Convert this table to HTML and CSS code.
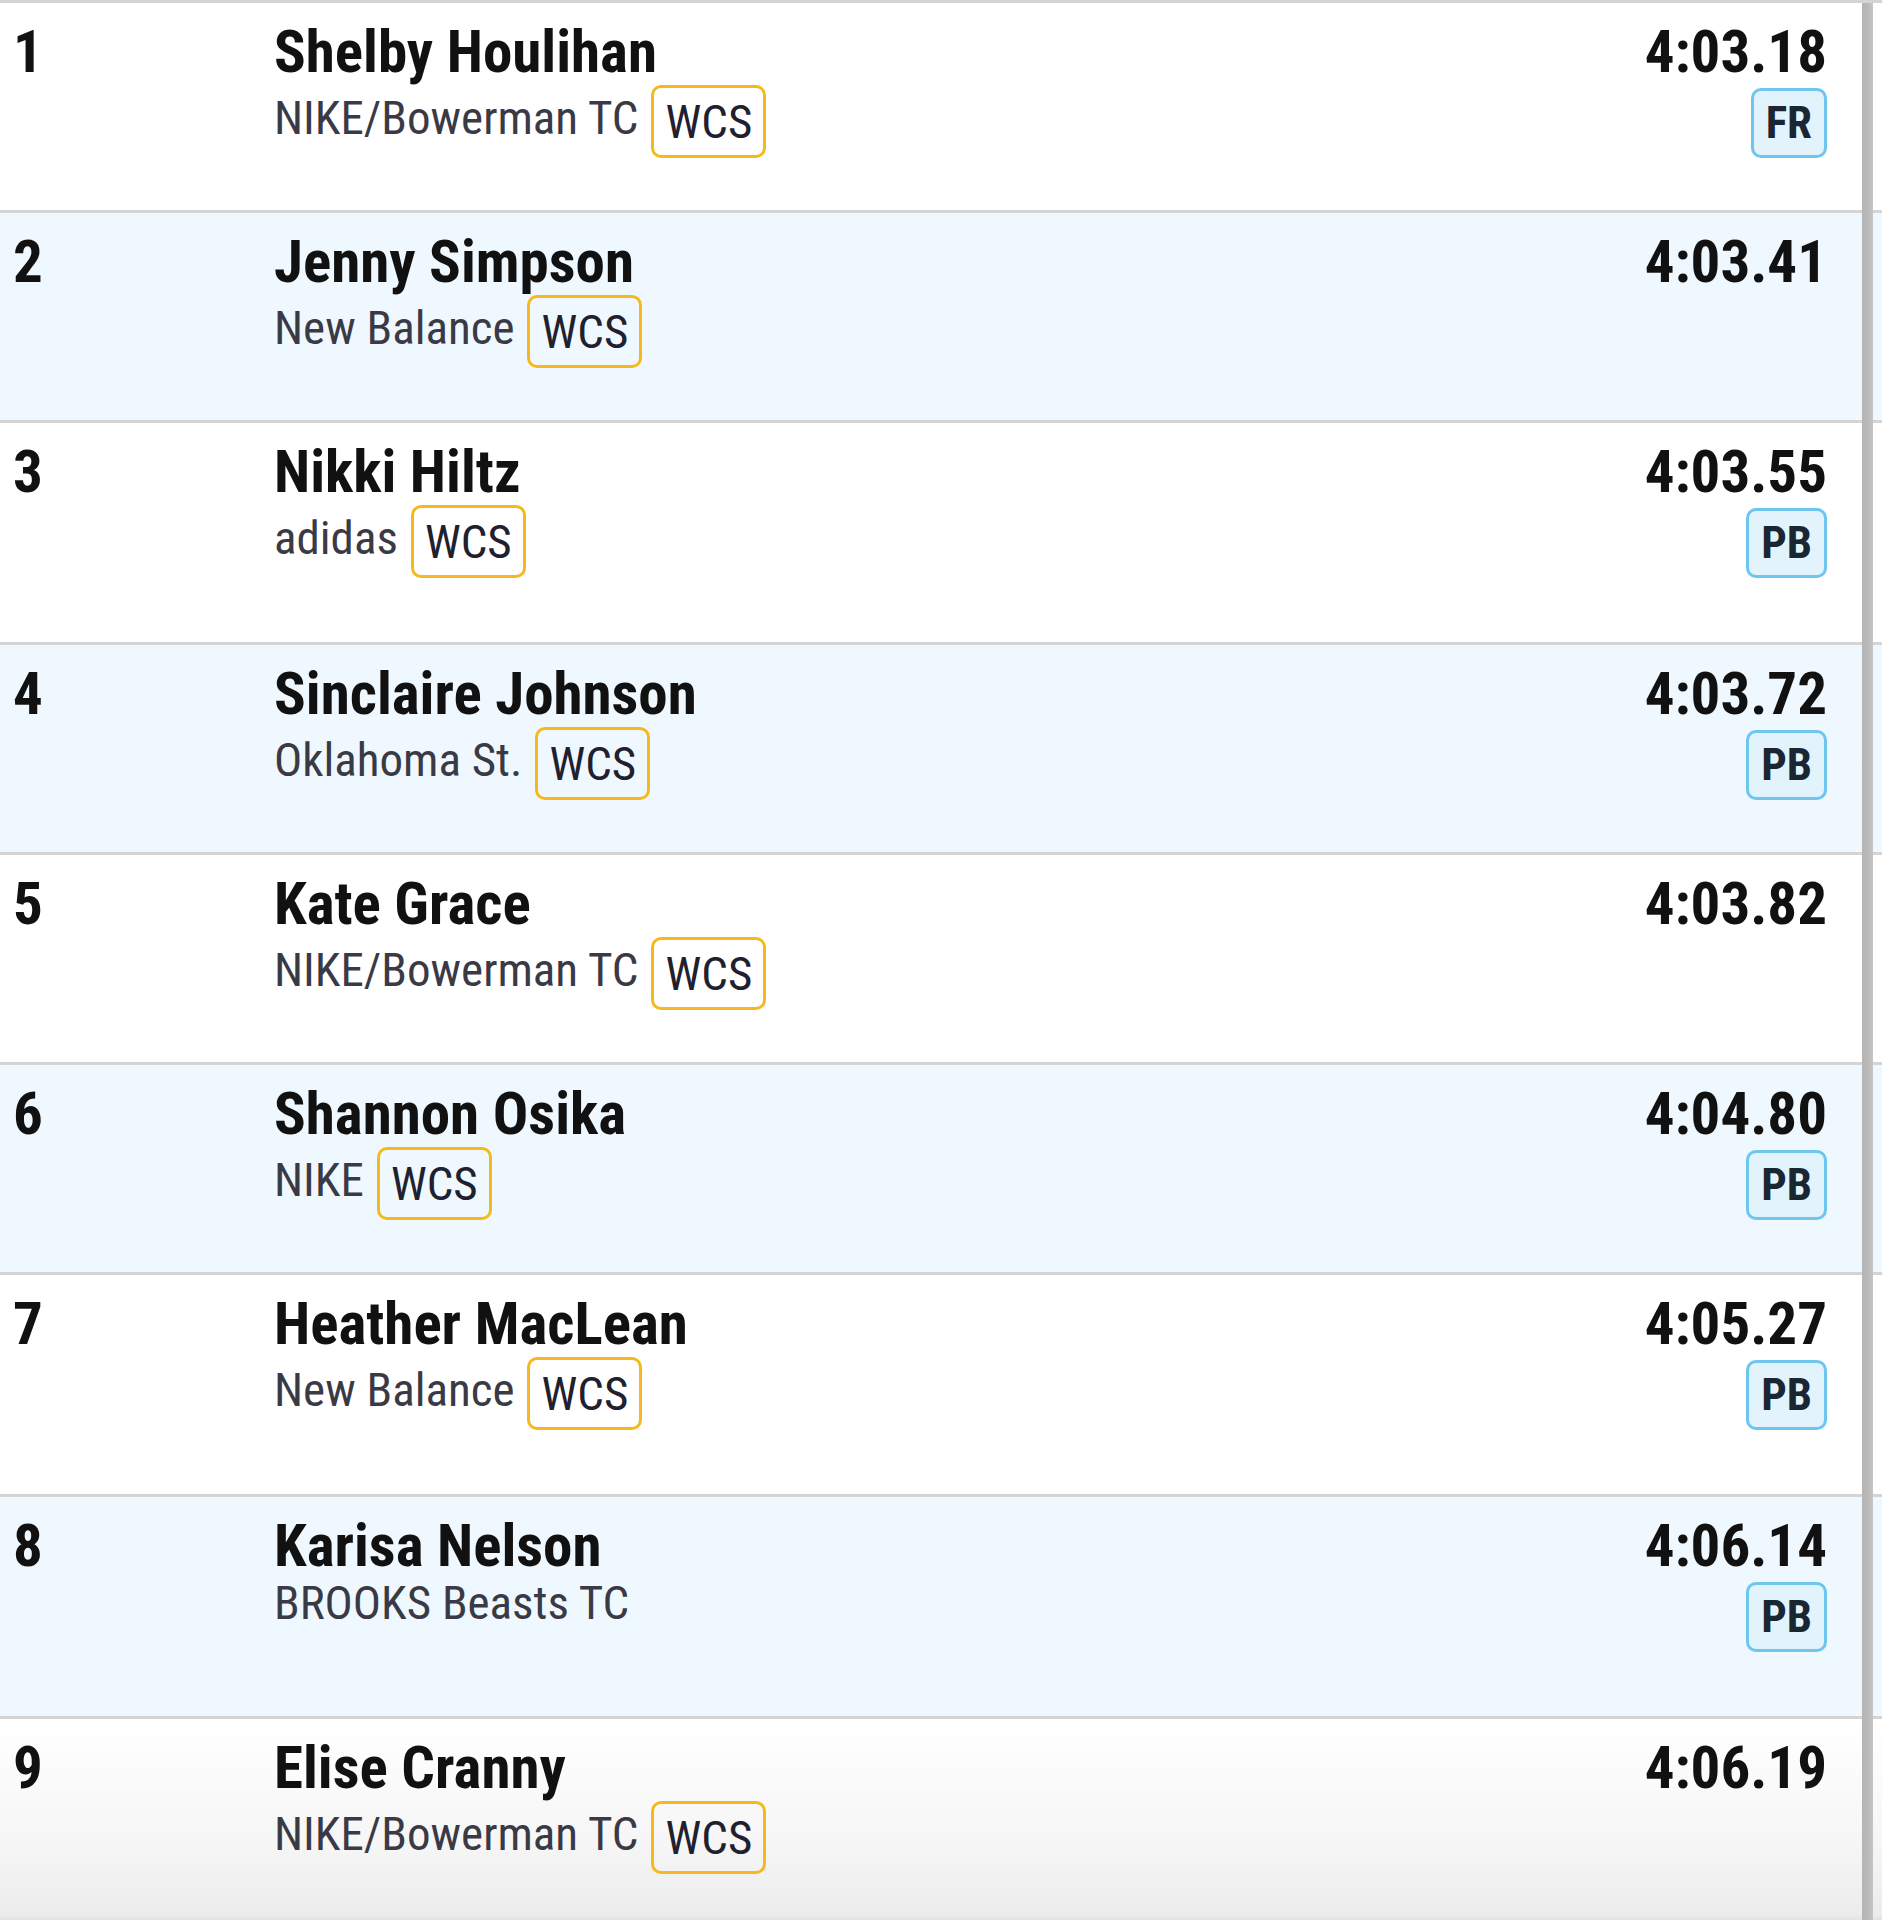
FILE: index.html
```html
<!DOCTYPE html>
<html lang="en">
<head>
<meta charset="utf-8">
<title>Results</title>
<link rel="stylesheet" href="styles.css">
</head>
<body>
<div class="results">
  <div class="row">
    <div class="rank">1</div>
    <div class="athlete">
      <div class="name">Shelby Houlihan</div>
      <div class="sub"><span class="team">NIKE/Bowerman TC</span><span class="tag wcs">WCS</span></div>
    </div>
    <div class="result"><div class="time">4:03.18</div><span class="tag mark">FR</span></div>
  </div>
  <div class="row alt">
    <div class="rank">2</div>
    <div class="athlete">
      <div class="name">Jenny Simpson</div>
      <div class="sub"><span class="team">New Balance</span><span class="tag wcs">WCS</span></div>
    </div>
    <div class="result"><div class="time">4:03.41</div></div>
  </div>
  <div class="row tall">
    <div class="rank">3</div>
    <div class="athlete">
      <div class="name">Nikki Hiltz</div>
      <div class="sub"><span class="team">adidas</span><span class="tag wcs">WCS</span></div>
    </div>
    <div class="result"><div class="time">4:03.55</div><span class="tag mark">PB</span></div>
  </div>
  <div class="row alt">
    <div class="rank">4</div>
    <div class="athlete">
      <div class="name">Sinclaire Johnson</div>
      <div class="sub"><span class="team">Oklahoma St.</span><span class="tag wcs">WCS</span></div>
    </div>
    <div class="result"><div class="time">4:03.72</div><span class="tag mark">PB</span></div>
  </div>
  <div class="row">
    <div class="rank">5</div>
    <div class="athlete">
      <div class="name">Kate Grace</div>
      <div class="sub"><span class="team">NIKE/Bowerman TC</span><span class="tag wcs">WCS</span></div>
    </div>
    <div class="result"><div class="time">4:03.82</div></div>
  </div>
  <div class="row alt">
    <div class="rank">6</div>
    <div class="athlete">
      <div class="name">Shannon Osika</div>
      <div class="sub"><span class="team">NIKE</span><span class="tag wcs">WCS</span></div>
    </div>
    <div class="result"><div class="time">4:04.80</div><span class="tag mark">PB</span></div>
  </div>
  <div class="row tall">
    <div class="rank">7</div>
    <div class="athlete">
      <div class="name">Heather MacLean</div>
      <div class="sub"><span class="team">New Balance</span><span class="tag wcs">WCS</span></div>
    </div>
    <div class="result"><div class="time">4:05.27</div><span class="tag mark">PB</span></div>
  </div>
  <div class="row alt tall">
    <div class="rank">8</div>
    <div class="athlete">
      <div class="name">Karisa Nelson</div>
      <div class="sub"><span class="team">BROOKS Beasts TC</span></div>
    </div>
    <div class="result"><div class="time">4:06.14</div><span class="tag mark">PB</span></div>
  </div>
  <div class="row last">
    <div class="rank">9</div>
    <div class="athlete">
      <div class="name">Elise Cranny</div>
      <div class="sub"><span class="team">NIKE/Bowerman TC</span><span class="tag wcs">WCS</span></div>
    </div>
    <div class="result"><div class="time">4:06.19</div></div>
  </div>
  <div class="scrollbar"></div>
</div>
</body>
</html>
```

FILE: styles.css
```css
html, body {
  margin: 0;
  padding: 0;
  background: #ffffff;
}

body {
  font-family: "Roboto Condensed", "Liberation Sans Narrow", "DejaVu Sans Condensed", "Liberation Sans", sans-serif;
  color: #111111;
}

.results {
  position: relative;
  height: 1920px;
  overflow: hidden;
  border-top: 3px solid #d4d4d4;
  box-sizing: border-box;
}

.row {
  display: flex;
  align-items: flex-start;
  height: 210px;
  box-sizing: border-box;
  border-bottom: 3px solid #d4d4d4;
  padding: 19px 55px 0 13px;
  background: #ffffff;
}

.row.alt {
  background: #eff8fe;
}

.row.tall {
  height: 222px;
}

.row.last {
  height: 204px;
  border-bottom: none;
  background: linear-gradient(to bottom, #ffffff 0%, #f6f6f6 60%, #ececec 96%, #dcdcdc 100%);
}

.rank {
  width: 261px;
  flex: none;
  font-weight: 700;
  font-size: 59px;
  line-height: 60px;
}

.athlete {
  flex: 1;
  min-width: 0;
}

.name {
  font-weight: 700;
  font-size: 59px;
  line-height: 60px;
  color: #111111;
  white-space: nowrap;
}

.sub {
  display: flex;
  align-items: center;
  margin-top: 3px;
}

.team {
  font-size: 47px;
  line-height: 48px;
  padding-bottom: 8px;
  color: #3a3a46;
  white-space: nowrap;
}

.tag {
  display: inline-flex;
  align-items: center;
  justify-content: center;
  box-sizing: border-box;
  border-radius: 10px;
  border: 3px solid transparent;
}

.tag.wcs {
  height: 73px;
  margin-left: 13px;
  padding: 0 11px;
  border-color: #f6b91c;
  font-size: 47px;
  line-height: 50px;
  color: #20202e;
}

.result {
  display: flex;
  flex-direction: column;
  align-items: flex-end;
}

.time {
  font-weight: 700;
  font-size: 59px;
  line-height: 60px;
  color: #111111;
  white-space: nowrap;
}

.tag.mark {
  margin-top: 6px;
  height: 70px;
  padding: 0 12px;
  border-color: #6ec6ef;
  background: #e2f3fc;
  font-weight: 700;
  font-size: 45px;
  line-height: 50px;
  color: #1b2633;
}

.scrollbar {
  position: absolute;
  top: 0;
  bottom: 0;
  right: 9px;
  width: 11px;
  background: linear-gradient(to right, #b4b4b4 0%, #bababa 60%, #c6c6c6 100%);
}
```
